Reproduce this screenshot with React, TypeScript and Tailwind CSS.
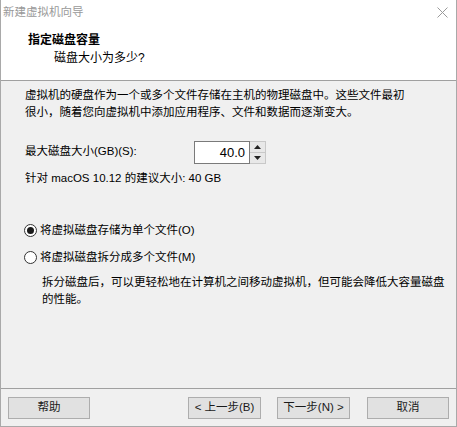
import React from "react";

const font = { fontFamily: '"Liberation Sans", "Noto Sans CJK SC", sans-serif' };

function Btn({ children, className = "" }: { children: React.ReactNode; className?: string }) {
  return (
    <div
      className={`h-[22px] flex items-center justify-center bg-[#e1e1e1] border border-[#adadad] text-[11.5px] text-[#1a1a1a] ${className}`}
    >
      {children}
    </div>
  );
}

function Radio({ checked }: { checked?: boolean }) {
  return (
    <div className="w-[13px] h-[13px] rounded-full border border-[#333] bg-white flex items-center justify-center shrink-0">
      {checked && <div className="w-[7px] h-[7px] rounded-full bg-[#1a1a1a]" />}
    </div>
  );
}

export default function App() {
  return (
    <div
      className="w-[457px] h-[427px] flex flex-col bg-[#f0f0f0] border-l border-r border-b border-[#a9a9a9] text-black text-[11.5px] overflow-hidden"
      style={font}
    >
      {/* Title bar + header (white) */}
      <div className="bg-white h-[81px] flex flex-col border-b border-[#a0a0a0] relative">
        <div className="h-[26px] flex items-center pl-[2px] text-[#999] text-[11.5px]">新建虚拟机向导</div>
        <svg className="absolute left-[436px] top-[7px]" width="11" height="11" viewBox="0 0 11 11">
          <path d="M0.5 0.5 L10.5 10.5 M10.5 0.5 L0.5 10.5" stroke="#9a9a9a" strokeWidth="1" fill="none" />
        </svg>
        <div className="pt-[5px] pl-[27px] leading-[18px] font-bold text-[12px]">指定磁盘容量</div>
        <div className="pl-[53px] leading-[18px] text-[12px]">磁盘大小为多少?</div>
      </div>

      {/* Body */}
      <div className="flex-1 flex flex-col pl-[24px] pt-[6px] leading-[17px] whitespace-nowrap">
        <div>
          虚拟机的硬盘作为一个或多个文件存储在主机的物理磁盘中。这些文件最初
          <br />
          很小，随着您向虚拟机中添加应用程序、文件和数据而逐渐变大。
        </div>

        <div className="mt-[20px] flex items-start h-[23px]">
          <div className="w-[169px] pt-[2px]">最大磁盘大小(GB)(S):</div>
          <div className="w-[56px] h-[23px] bg-white border border-[#7a7a7a] flex items-center justify-end pr-[4px] text-[13px]">
            40.0
          </div>
          <div className="w-[16px] h-[23px] flex flex-col border border-l-0 border-[#c8c8c8] bg-[#e8e8e8]">
            <div className="flex-1 flex items-center justify-center border-b border-[#c8c8c8]">
              <svg width="7" height="4" viewBox="0 0 7 4">
                <path d="M0 4 L3.5 0 L7 4 Z" fill="#222" />
              </svg>
            </div>
            <div className="flex-1 flex items-center justify-center">
              <svg width="7" height="4" viewBox="0 0 7 4">
                <path d="M0 0 L3.5 4 L7 0 Z" fill="#222" />
              </svg>
            </div>
          </div>
        </div>

        <div className="mt-[6px]">针对 macOS 10.12 的建议大小: 40 GB</div>

        <div className="mt-[35px] flex items-center gap-[3px] -ml-[1px]">
          <Radio checked />
          <span>将虚拟磁盘存储为单个文件(O)</span>
        </div>
        <div className="mt-[10px] flex items-center gap-[3px] -ml-[1px]">
          <Radio />
          <span>将虚拟磁盘拆分成多个文件(M)</span>
        </div>
        <div className="mt-[8px] pl-[17px]">
          拆分磁盘后，可以更轻松地在计算机之间移动虚拟机，但可能会降低大容量磁盘
          <br />
          的性能。
        </div>
      </div>

      {/* Footer */}
      <div className="h-[38px] border-t border-[#a0a0a0] flex items-start pt-[8px] pl-[7px] pr-[7px]">
        <Btn className="w-[82px]">帮助</Btn>
        <div className="flex-1" />
        <Btn className="w-[73px]">&lt; 上一步(B)</Btn>
        <Btn className="w-[73px] ml-[16px]">下一步(N) &gt;</Btn>
        <Btn className="w-[82px] ml-[17px]">取消</Btn>
      </div>
    </div>
  );
}
